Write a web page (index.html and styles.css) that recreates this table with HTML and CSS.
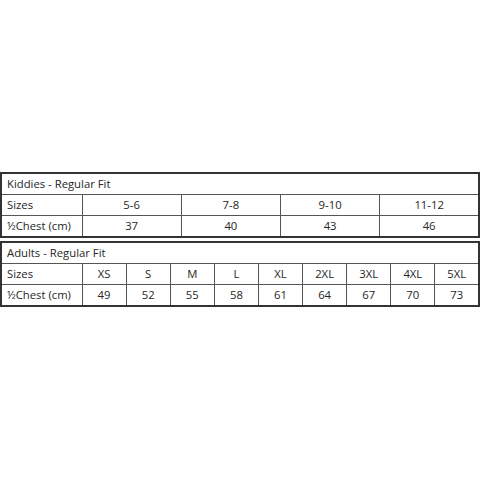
FILE: index.html
```html
<!DOCTYPE html>
<html>
<head>
<meta charset="utf-8">
<link rel="stylesheet" href="styles.css">
</head>
<body>
<div class="charts">
  <table class="size-table kids">
    <colgroup><col class="label-col"><col><col><col><col></colgroup>
    <tr><td class="title" colspan="5">Kiddies - Regular Fit</td></tr>
    <tr><td class="label">Sizes</td><td>5-6</td><td>7-8</td><td>9-10</td><td>11-12</td></tr>
    <tr><td class="label">½Chest (cm)</td><td>37</td><td>40</td><td>43</td><td>46</td></tr>
  </table>
  <table class="size-table adults">
    <colgroup><col class="label-col"><col><col><col><col><col><col><col><col><col></colgroup>
    <tr><td class="title" colspan="10">Adults - Regular Fit</td></tr>
    <tr><td class="label">Sizes</td><td>XS</td><td>S</td><td>M</td><td>L</td><td>XL</td><td>2XL</td><td>3XL</td><td>4XL</td><td>5XL</td></tr>
    <tr><td class="label">½Chest (cm)</td><td>49</td><td>52</td><td>55</td><td>58</td><td>61</td><td>64</td><td>67</td><td>70</td><td>73</td></tr>
  </table>
</div>
</body>
</html>
```
FILE: styles.css
```css
html, body {
  margin: 0;
  padding: 0;
  background: #ffffff;
}
body {
  width: 480px;
  height: 480px;
  font-family: "Open Sans", "Noto Sans", sans-serif;
  font-size: 11.3px;
  color: #262626;
}
.charts {
  display: flex;
  flex-direction: column;
  gap: 3px;
  padding-top: 172px;
}
.size-table {
  width: 480px;
  border-collapse: collapse;
  table-layout: fixed;
  border: 2px solid #333;
}
.label-col {
  width: 81px;
}
.size-table td {
  border: 1px solid #555;
  height: 20px;
  padding: 0;
  text-align: center;
  line-height: 20px;
  white-space: nowrap;
}
.size-table td.title,
.size-table td.label {
  text-align: left;
  padding-left: 5px;
}
```
